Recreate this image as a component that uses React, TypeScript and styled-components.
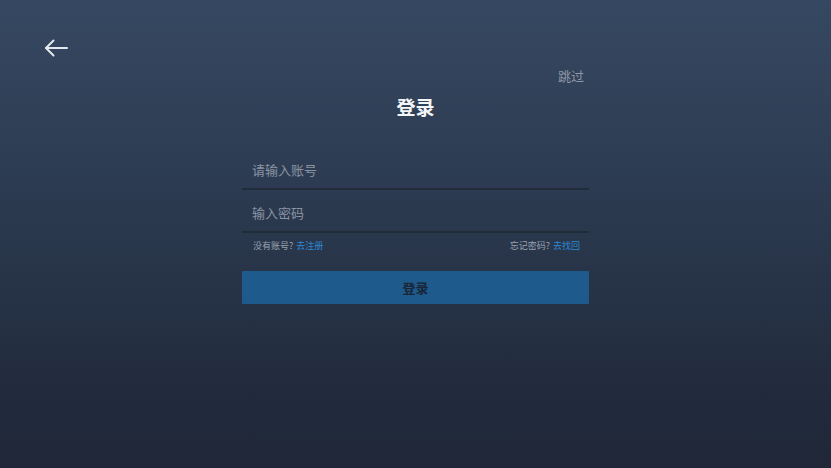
import React from "react";
import styled, { createGlobalStyle } from "styled-components";

const Global = createGlobalStyle`
  html, body { margin: 0; padding: 0; }
  body { font-family: "Noto Sans CJK SC", "Noto Sans", sans-serif; }
`;

const Page = styled.div`
  width: 831px;
  height: 468px;
  background: linear-gradient(180deg, #364861 0%, #2c3b51 40%, #222c3e 80%, #1f2738 100%);
  position: relative;
  overflow: hidden;
  display: flex;
  flex-direction: column;
  align-items: center;
`;

const BackButton = styled.button`
  position: absolute;
  left: 42px;
  top: 37px;
  width: 28px;
  height: 22px;
  padding: 0;
  border: none;
  background: transparent;
  display: flex;
  align-items: center;
  justify-content: center;
`;

const Content = styled.div`
  width: 347px;
  padding-top: 66px;
  display: flex;
  flex-direction: column;
`;

const SkipRow = styled.div`
  display: flex;
  justify-content: flex-end;
  padding-right: 5px;
  height: 19px;
  align-items: center;
`;

const Skip = styled.span`
  font-size: 13px;
  color: #8d97a6;
`;

const Title = styled.h1`
  margin: 0;
  margin-top: 9px;
  text-align: center;
  font-size: 19px;
  line-height: 26px;
  font-weight: 700;
  color: #f4f6f8;
`;

const Field = styled.div`
  box-sizing: border-box;
  height: 43px;
  border-bottom: 2px solid #222b39;
  display: flex;
  align-items: center;
  padding-left: 10px;
  padding-top: 4px;
`;

const FirstField = styled(Field)`
  margin-top: 27px;
`;

const Placeholder = styled.span`
  font-size: 13px;
  color: #8a94a3;
`;

const LinksRow = styled.div`
  display: flex;
  justify-content: space-between;
  padding: 0 9px 0 11px;
  margin-top: 5px;
  height: 15px;
  align-items: center;
  font-size: 9px;
`;

const Muted = styled.span`
  color: #9aa3b0;
`;

const Link = styled.span`
  color: #2c88d4;
  margin-left: 3px;
`;

const SubmitButton = styled.button`
  margin-top: 18px;
  height: 33px;
  width: 100%;
  border: none;
  border-radius: 1px;
  background: #1f5a8d;
  color: #182638;
  font-family: "Noto Sans CJK SC", "Noto Sans", sans-serif;
  font-size: 13px;
  font-weight: 700;
  padding: 0;
`;

export default function App() {
  return (
    <>
      <Global />
      <Page>
        <BackButton aria-label="返回">
          <svg width="26" height="20" viewBox="0 0 26 20" fill="none">
            <path d="M24 10H3" stroke="#e4e8ee" strokeWidth="2" strokeLinecap="round" />
            <path d="M10.5 2.5L3 10l7.5 7.5" stroke="#e4e8ee" strokeWidth="2" strokeLinecap="round" strokeLinejoin="round" />
          </svg>
        </BackButton>
        <Content>
          <SkipRow>
            <Skip>跳过</Skip>
          </SkipRow>
          <Title>登录</Title>
          <FirstField>
            <Placeholder>请输入账号</Placeholder>
          </FirstField>
          <Field>
            <Placeholder>输入密码</Placeholder>
          </Field>
          <LinksRow>
            <span>
              <Muted>没有账号?</Muted>
              <Link>去注册</Link>
            </span>
            <span>
              <Muted>忘记密码?</Muted>
              <Link>去找回</Link>
            </span>
          </LinksRow>
          <SubmitButton>登录</SubmitButton>
        </Content>
      </Page>
    </>
  );
}
